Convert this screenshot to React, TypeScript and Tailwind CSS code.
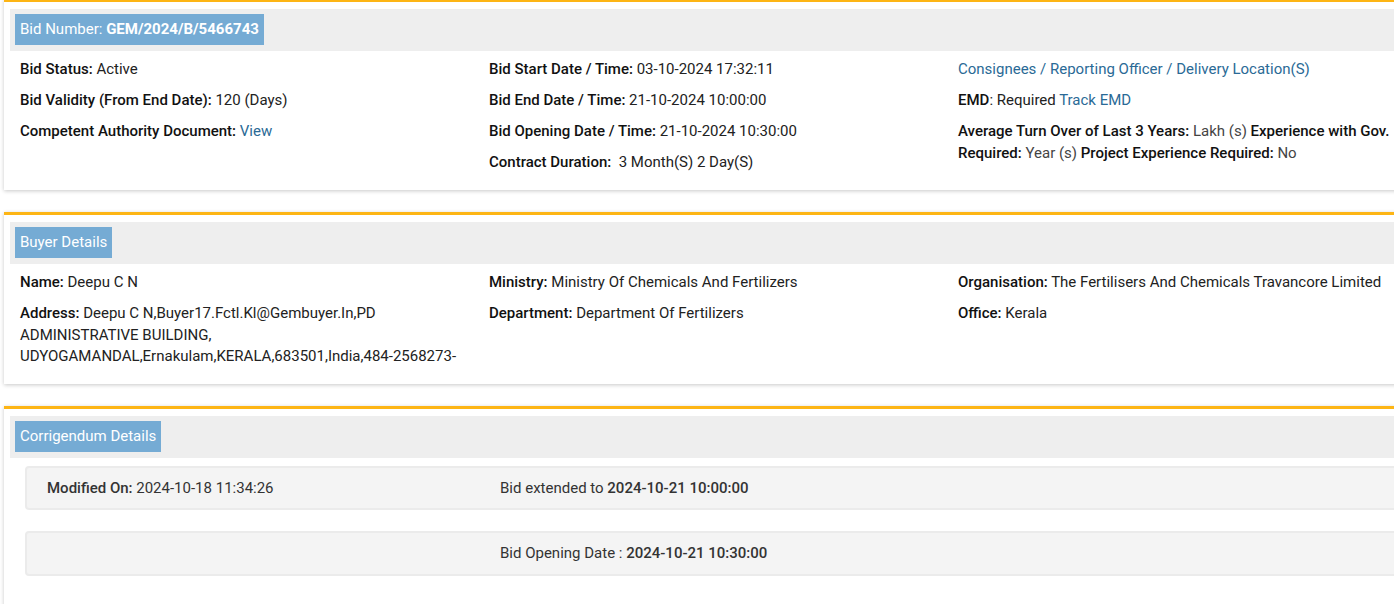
import React from "react";

const L = ({ children }: { children: React.ReactNode }) => (
  <span className="font-medium text-[#111]">{children}</span>
);
const A = ({ children }: { children: React.ReactNode }) => (
  <span className="text-[#2a6a96]">{children}</span>
);

const P = ({ children }: { children: React.ReactNode }) => (
  <p className="mb-[9.5px] leading-[21.5px]">{children}</p>
);

function Card({
  title,
  children,
  last,
  first,
}: {
  title: React.ReactNode;
  children: React.ReactNode;
  last?: boolean;
  first?: boolean;
}) {
  return (
    <div
      className={`ml-[4px] w-[1419px] border-t-[3px] border-[#fdb515] bg-white px-[6px] pt-[7px] shadow-[0_1px_4px_rgba(0,0,0,0.22)] ${
        last ? "pb-[40px]" : "mb-[22px] pb-[7px]"
      } ${first ? "-mt-[1px]" : ""}`}
    >
      <div className="h-[42px] bg-[#eeeeee] py-[5px] pl-[5px]">
        <div className="inline-flex h-[31px] items-center bg-[#75abd4] px-[5px] text-[15px] text-white">
          {title}
        </div>
      </div>
      {children}
    </div>
  );
}

export default function App() {
  return (
    <div
      className="w-[1394px] h-[604px] overflow-hidden bg-white text-[15px] text-[#222]"
      style={{ fontFamily: "Roboto, 'Liberation Sans', sans-serif" }}
    >
      <Card
        first
        title={
          <>
            Bid Number:&nbsp;<span className="font-bold">GEM/2024/B/5466743</span>
          </>
        }
      >
        <div className="grid grid-cols-[469px_469px_469px] pt-[8px]">
          <div className="px-[10px]">
            <P>
              <L>Bid Status:</L> Active
            </P>
            <P>
              <L>Bid Validity (From End Date):</L> 120 (Days)
            </P>
            <P>
              <L>Competent Authority Document:</L> <A>View</A>
            </P>
          </div>
          <div className="px-[10px]">
            <P>
              <L>Bid Start Date / Time:</L> 03-10-2024 17:32:11
            </P>
            <P>
              <L>Bid End Date / Time:</L> 21-10-2024 10:00:00
            </P>
            <P>
              <L>Bid Opening Date / Time:</L> 21-10-2024 10:30:00
            </P>
            <P>
              <L>Contract Duration:</L>&nbsp; 3 Month(S) 2 Day(S)
            </P>
          </div>
          <div className="px-[10px]">
            <P>
              <A>Consignees / Reporting Officer / Delivery Location(S)</A>
            </P>
            <P>
              <L>EMD</L>: Required <A>Track EMD</A>
            </P>
            <P>
              <L>Average Turn Over of Last 3 Years:</L>{" "}
              <span className="text-[#444]">Lakh (s)</span>{" "}
              <L>Experience with Gov. Required:</L>{" "}
              <span className="text-[#444]">Year (s)</span>{" "}
              <L>Project Experience Required:</L> <span className="text-[#444]">No</span>
            </P>
          </div>
        </div>
      </Card>

      <Card title="Buyer Details">
        <div className="grid grid-cols-[469px_469px_469px] pt-[8px]">
          <div className="px-[10px]">
            <P>
              <L>Name:</L> Deepu C N
            </P>
            <P>
              <L>Address:</L> Deepu C N,Buyer17.Fctl.Kl@Gembuyer.In,PD ADMINISTRATIVE BUILDING,
              UDYOGAMANDAL,Ernakulam,KERALA,683501,India,484-2568273-
            </P>
          </div>
          <div className="px-[10px]">
            <P>
              <L>Ministry:</L> Ministry Of Chemicals And Fertilizers
            </P>
            <P>
              <L>Department:</L> Department Of Fertilizers
            </P>
          </div>
          <div className="px-[10px]">
            <P>
              <L>Organisation:</L> The Fertilisers And Chemicals Travancore Limited
            </P>
            <P>
              <L>Office:</L> Kerala
            </P>
          </div>
        </div>
      </Card>

      <Card title="Corrigendum Details" last>
        <div className="pl-[15px] pt-[8px] text-[#333]">
          <div className="mb-[21px] grid h-[44px] grid-cols-[453px_453px_453px] items-center rounded-[4px] border-[2px] border-[#ebebeb] bg-[#f4f4f4]">
            <div className="pl-[20px]">
              <span className="font-medium">Modified On:</span> 2024-10-18 11:34:26
            </div>
            <div className="pl-[20px]">
              Bid extended to <span className="font-medium">2024-10-21 10:00:00</span>
            </div>
            <div />
          </div>
          <div className="grid h-[45px] grid-cols-[453px_453px_453px] items-center rounded-[4px] border-[2px] border-[#ebebeb] bg-[#f4f4f4]">
            <div />
            <div className="pl-[20px]">
              Bid Opening Date : <span className="font-medium">2024-10-21 10:30:00</span>
            </div>
            <div />
          </div>
        </div>
      </Card>
    </div>
  );
}
